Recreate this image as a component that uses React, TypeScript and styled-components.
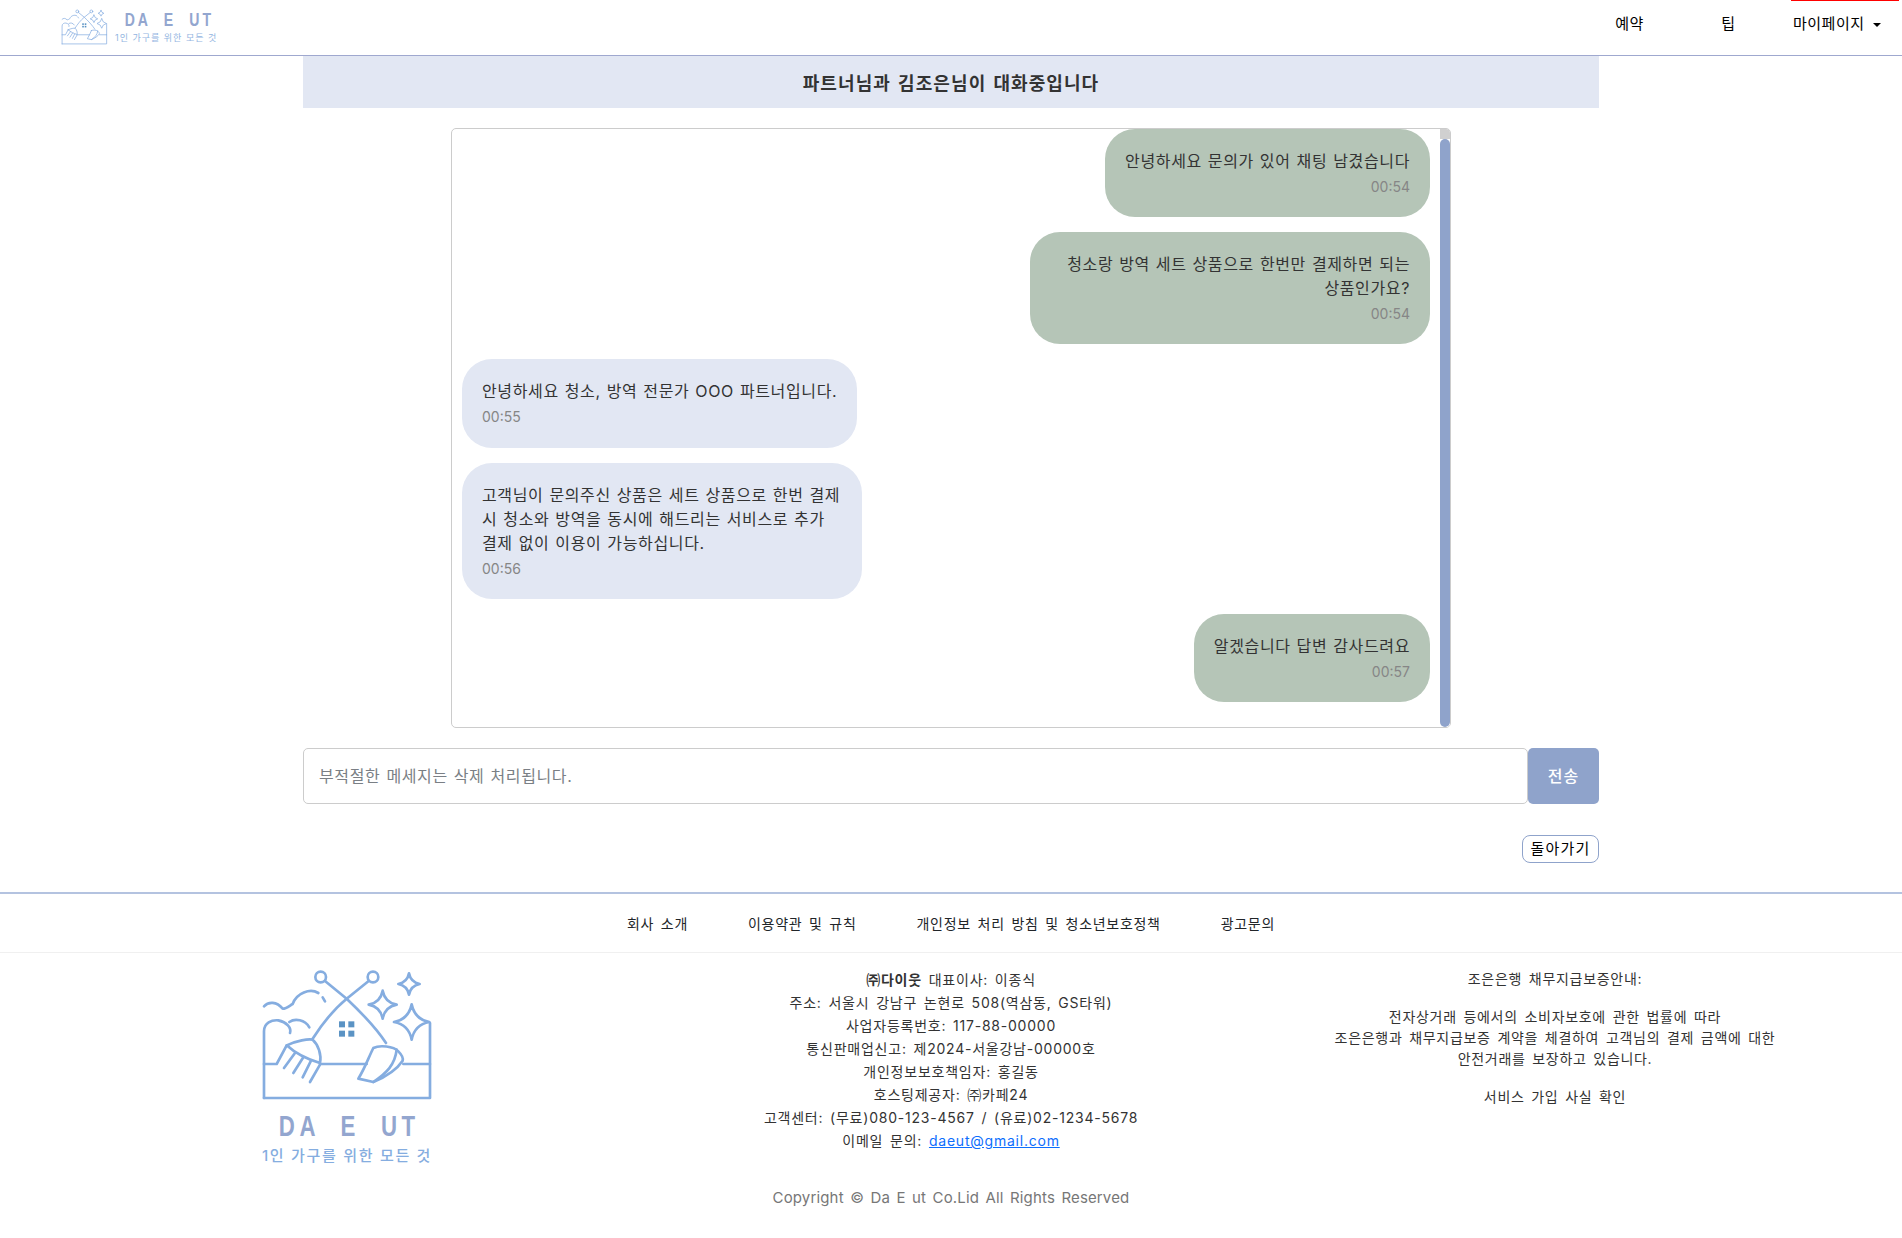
import React from "react";
import styled, { createGlobalStyle } from "styled-components";

const GlobalStyle = createGlobalStyle`
  * { box-sizing: border-box; }
  html, body { margin: 0; padding: 0; background: #fff; }
  body {
    font-family: Inter, "Noto Sans CJK KR", "Noto Sans", sans-serif;
    color: #333;
    font-size: 16px;
    line-height: 1.5;
    letter-spacing: 0.04em;
    word-spacing: 0.05em;
  }
  input, button { letter-spacing: inherit; word-spacing: inherit; }
`;

const Star = ({ x, y, r }: { x: number; y: number; r: number }) => {
  const k = r * 0.16;
  return (
    <path
      d={`M${x} ${y - r} Q${x + k} ${y - k} ${x + r} ${y} Q${x + k} ${y + k} ${x} ${y + r} Q${x - k} ${y + k} ${x - r} ${y} Q${x - k} ${y - k} ${x} ${y - r}Z`}
    />
  );
};

// traced from the logo, coordinates are in a 3x grid
const LogoArt = ({ width }: { width: number }) => (
  <svg
    width={width}
    height={(width * 405) / 525}
    viewBox="60 50 525 405"
    fill="none"
    stroke="#85ade0"
    strokeWidth="8"
    strokeLinecap="round"
    strokeLinejoin="round"
  >
    <circle cx="242" cy="77" r="16" />
    <circle cx="399" cy="77" r="16" />
    <path d="M255 89 L320 142 C360 180 410 232 438 275" />
    <path d="M386 89 L320 142 C280 175 245 220 218 262" />
    <path d="M72 165 C85 150 110 150 128 172 C140 172 150 162 158 158 C170 125 210 110 235 125" />
    <path d="M248 138 L255 150" />
    <path d="M72 440 V240 C72 215 95 205 115 207 C140 212 155 230 150 245" />
    <path d="M148 212 C165 200 195 205 208 228" />
    <path d="M72 440 H570 V215" />
    <path d="M72 338 H110 L140 282" />
    <path d="M240 338 H380 M490 338 H570" />
    <path d="M140 282 C170 268 205 262 218 265 C235 280 245 310 240 335 C205 325 165 305 140 282 Z" />
    <path d="M165 305 L132 350 M190 318 L160 365 M212 330 L188 378 M240 340 L210 392" />
    <path d="M400 290 C420 280 460 285 475 300 C485 310 490 320 488 328 C470 355 440 375 400 392 L355 382 C375 350 385 320 400 290 Z" />
    <path d="M470 295 C465 340 440 365 400 392" />
    <Star x={507} y={98} r={32} />
    <Star x={428} y={160} r={42} />
    <Star x={515} y={212} r={53} />
    <g fill="#5b93c4" stroke="none">
      <rect x="297" y="210" width="18" height="18" />
      <rect x="325" y="210" width="18" height="18" />
      <rect x="297" y="238" width="18" height="18" />
      <rect x="325" y="238" width="18" height="18" />
    </g>
  </svg>
);

export default function App() {
  return (
    <Page>
      <GlobalStyle />
      <Header>
        <Brand>
          <LogoArt width={47} />
          <BrandText>
            <BrandName>DA E UT</BrandName>
            <BrandSub>1인 가구를 위한 모든 것</BrandSub>
          </BrandText>
        </Brand>
        <Nav>
          <NavItem>예약</NavItem>
          <NavItem>팁</NavItem>
          <MyPage>
            마이페이지
            <Caret />
          </MyPage>
        </Nav>
      </Header>

      <Main>
        <TitleBar>파트너님과 김조은님이 대화중입니다</TitleBar>
        <ChatBox>
          <ScrollThumb />
          <Bubble $mine>
            <p>안녕하세요 문의가 있어 채팅 남겼습니다</p>
            <Time>00:54</Time>
          </Bubble>
          <Bubble $mine>
            <p>청소랑 방역 세트 상품으로 한번만 결제하면 되는 상품인가요?</p>
            <Time>00:54</Time>
          </Bubble>
          <Bubble>
            <p>안녕하세요 청소, 방역 전문가 OOO 파트너입니다.</p>
            <Time>00:55</Time>
          </Bubble>
          <Bubble>
            <p>
              고객님이 문의주신 상품은 세트 상품으로 한번 결제시 청소와 방역을 동시에 해드리는 서비스로 추가 결제 없이 이용이
              가능하십니다.
            </p>
            <Time>00:56</Time>
          </Bubble>
          <Bubble $mine>
            <p>알겠습니다 답변 감사드려요</p>
            <Time>00:57</Time>
          </Bubble>
        </ChatBox>
        <InputRow>
          <MessageInput placeholder="부적절한 메세지는 삭제 처리됩니다." />
          <SendButton>전송</SendButton>
        </InputRow>
        <BackRow>
          <BackButton>돌아가기</BackButton>
        </BackRow>
      </Main>

      <Footer>
        <FooterLinks>
          <a>회사 소개</a>
          <a>이용약관 및 규칙</a>
          <a>개인정보 처리 방침 및 청소년보호정책</a>
          <a>광고문의</a>
        </FooterLinks>
        <FooterBody>
          <FooterLogo>
            <LogoArt width={175} />
            <FooterName>DA E UT</FooterName>
            <FooterSub>1인 가구를 위한 모든 것</FooterSub>
          </FooterLogo>
          <Company>
            <div>
              <strong>㈜다이웃</strong> 대표이사: 이종식
            </div>
            <div>주소: 서울시 강남구 논현로 508(역삼동, GS타워)</div>
            <div>사업자등록번호: 117-88-00000</div>
            <div>통신판매업신고: 제2024-서울강남-00000호</div>
            <div>개인정보보호책임자: 홍길동</div>
            <div>호스팅제공자: ㈜카페24</div>
            <div>고객센터: (무료)080-123-4567 / (유료)02-1234-5678</div>
            <div>
              이메일 문의: <MailLink>daeut@gmail.com</MailLink>
            </div>
          </Company>
          <Guarantee>
            <p>조은은행 채무지급보증안내:</p>
            <p>
              전자상거래 등에서의 소비자보호에 관한 법률에 따라
              <br />
              조은은행과 채무지급보증 계약을 체결하여 고객님의 결제 금액에 대한
              <br />
              안전거래를 보장하고 있습니다.
            </p>
            <p>서비스 가입 사실 확인</p>
          </Guarantee>
        </FooterBody>
        <Copyright>Copyright © Da E ut Co.Lid All Rights Reserved</Copyright>
      </Footer>
    </Page>
  );
}

const Page = styled.div`
  min-height: 1238px;
  display: flex;
  flex-direction: column;
`;

const Header = styled.header`
  height: 56px;
  border-bottom: 1px solid #9fa8cf;
  display: flex;
  align-items: center;
  justify-content: space-between;
  padding: 0 3px 6px 61px;
`;

const Brand = styled.div`
  display: flex;
  align-items: center;
  gap: 7px;
  margin-top: 6px;
`;

const BrandText = styled.div`
  display: flex;
  flex-direction: column;
  align-items: center;
`;

const BrandName = styled.div`
  font-family: "Liberation Sans", sans-serif;
  font-size: 19px;
  line-height: 20px;
  font-weight: 700;
  letter-spacing: 4px;
  word-spacing: 8.7px;
  color: #93a6cf;
  margin: -2px -20px 2px -14px;
  transform: scaleX(0.74);
`;

const BrandSub = styled.div`
  font-size: 9px;
  line-height: 12px;
  letter-spacing: 1px;
  word-spacing: 0;
  color: #93b5e1;
`;

const Nav = styled.nav`
  display: flex;
  align-items: center;
  color: #000;
  font-size: 15px;
  letter-spacing: 0.5px;
`;

const NavItem = styled.a`
  width: 99px;
  text-align: center;
`;

const MyPage = styled.a`
  position: relative;
  display: flex;
  align-items: center;
  gap: 8px;
  width: 108px;
  margin-left: 13px;
  padding-left: 2px;

  &::before {
    content: "";
    position: absolute;
    left: 0;
    right: 0;
    top: -13.75px;
    height: 1px;
    background: #f00;
  }
`;

const Caret = styled.span`
  width: 0;
  height: 0;
  border-left: 4px solid transparent;
  border-right: 4px solid transparent;
  border-top: 4px solid #000;
`;

const Main = styled.main`
  width: 1296px;
  margin: 0 auto;
`;

const TitleBar = styled.div`
  height: 52px;
  padding-top: 2px;
  background: #e2e7f3;
  display: flex;
  align-items: center;
  justify-content: center;
  font-size: 18px;
  font-weight: 700;
  letter-spacing: 0.06em;
  word-spacing: 0.1em;
`;

const ChatBox = styled.div`
  position: relative;
  width: 1000px;
  height: 600px;
  margin: 20px auto 0;
  padding: 0 20px 0 10px;
  border: 1px solid #ccc;
  border-radius: 5px;
  display: flex;
  flex-direction: column;
  gap: 15px;
  overflow: hidden;
`;

const ScrollThumb = styled.div`
  position: absolute;
  top: 0;
  right: 0;
  bottom: 0;
  width: 10px;
  background: linear-gradient(#d0d0d0 0 10px, #fff 10px);

  &::after {
    content: "";
    position: absolute;
    inset: 10px 0 0;
    border-radius: 5px;
    background: #8fa3cb;
  }
`;

const Bubble = styled.div<{ $mine?: boolean }>`
  align-self: ${(p) => (p.$mine ? "flex-end" : "flex-start")};
  max-width: 400px;
  padding: 20px;
  border-radius: 30px;
  background: ${(p) => (p.$mine ? "#b5c5b7" : "#e2e7f3")};
  text-align: ${(p) => (p.$mine ? "right" : "left")};

  p {
    margin: 0;
  }
`;

const Time = styled.div`
  margin-top: 3px;
  font-size: 14px;
  line-height: 21.2px;
  letter-spacing: 0;
  color: #868686;
`;

const InputRow = styled.div`
  display: flex;
  margin-top: 20px;
`;

const MessageInput = styled.input`
  flex: 1;
  height: 56px;
  padding: 0 15px;
  border: 1px solid #ccc;
  border-radius: 5px;
  font: inherit;
  color: #212529;
  outline: none;

  &::placeholder {
    color: #7a7f85;
  }
`;

const SendButton = styled.button`
  width: 71px;
  height: 56px;
  border: 0;
  border-radius: 5px;
  background: #8fa3cb;
  color: #fff;
  font: inherit;
  font-weight: 500;
  letter-spacing: 0.06em;
`;

const BackRow = styled.div`
  display: flex;
  justify-content: flex-end;
  margin-top: 31px;
`;

const BackButton = styled.button`
  width: 77px;
  height: 28px;
  padding: 0;
  border: 1px solid #8fa3cb;
  border-radius: 8px;
  background: #fff;
  color: #000;
  font: inherit;
  font-size: 15px;
  letter-spacing: 0.08em;
`;

const Footer = styled.footer`
  margin-top: 29px;
  border-top: 2px solid #b4c3e0;
  word-spacing: 0.13em;
`;

const FooterLinks = styled.div`
  height: 59px;
  border-bottom: 1px solid #f0f0f0;
  display: flex;
  justify-content: center;
  align-items: center;
  gap: 60px;
  font-size: 14px;
  letter-spacing: 0.05em;
  color: #212529;
`;

const FooterBody = styled.div`
  width: 1812px;
  margin: 0 auto;
  display: grid;
  grid-template-columns: repeat(3, 1fr);
  padding-top: 15px;
`;

const FooterLogo = styled.div`
  display: flex;
  flex-direction: column;
  align-items: center;
`;

const FooterName = styled.div`
  font-family: "Liberation Sans", sans-serif;
  font-size: 30px;
  line-height: 34px;
  font-weight: 700;
  letter-spacing: 6.3px;
  word-spacing: 13.8px;
  color: #93a6cf;
  margin: 6px 0 2px 5px;
  transform: scaleX(0.74);
`;

const FooterSub = styled.div`
  font-size: 15px;
  line-height: 22px;
  letter-spacing: 1.7px;
  word-spacing: 0;
  color: #85ade0;
  font-weight: 500;
`;

const Company = styled.div`
  text-align: center;
  font-size: 14px;
  line-height: 23px;
  letter-spacing: 0.055em;
`;

const MailLink = styled.a`
  color: #0d6efd;
  text-decoration: underline;
`;

const Guarantee = styled.div`
  text-align: center;
  font-size: 14px;
  line-height: 21px;
  letter-spacing: 0.05em;

  p {
    margin: 0 0 17px;
  }
`;

const Copyright = styled.div`
  text-align: center;
  font-size: 15px;
  letter-spacing: 0.01em;
  color: #777;
  margin-top: 20px;
`;
